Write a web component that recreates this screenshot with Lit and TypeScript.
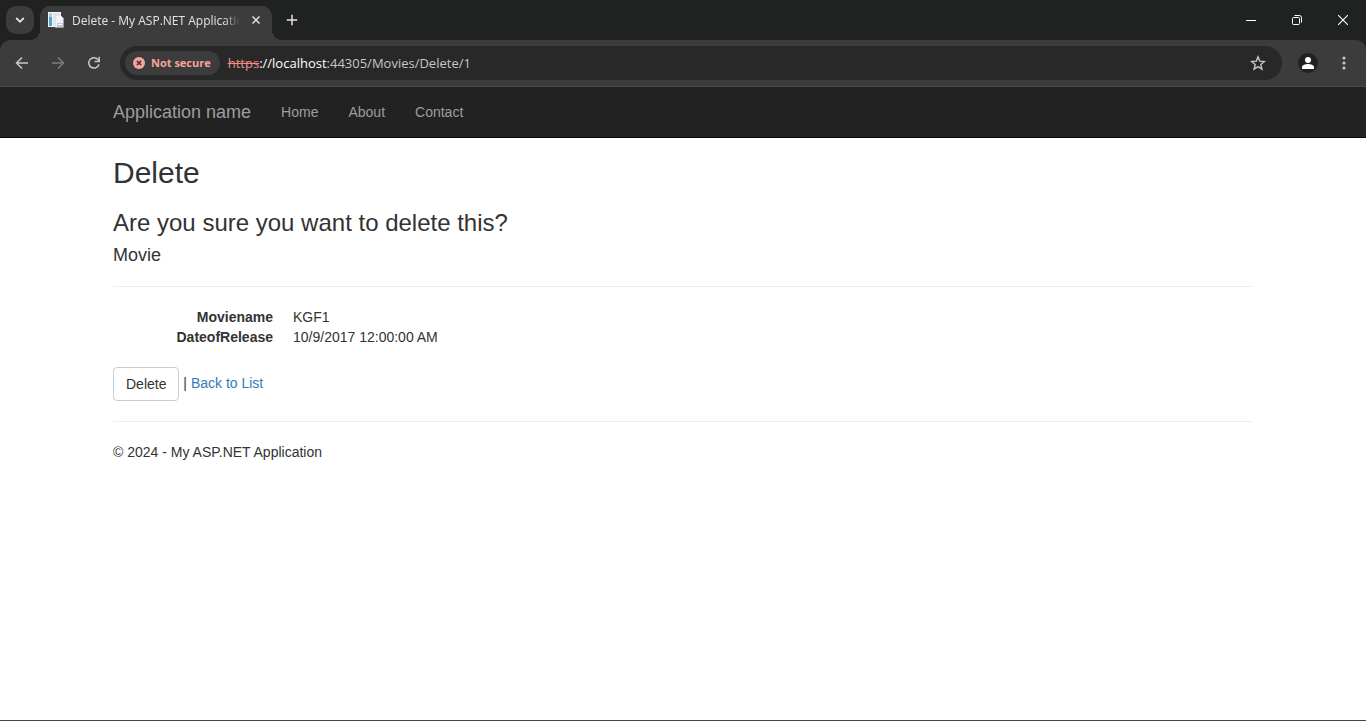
import { LitElement, html, css } from "lit";
import { customElement, property } from "lit/decorators.js";

@customElement("browser-chrome")
class BrowserChrome extends LitElement {
  @property() pageTitle = "";

  static styles = css`
    :host {
      display: block;
      font: 12px/16px "Open Sans", "Noto Sans", sans-serif;
      color: #e3e3e3;
      background: #202222;
    }
    * {
      box-sizing: border-box;
    }
    button {
      display: flex;
      align-items: center;
      justify-content: center;
      flex: none;
      margin: 0;
      padding: 0;
      border: 0;
      background: none;
      color: inherit;
      font: inherit;
    }
    svg {
      display: block;
      flex: none;
      fill: none;
      stroke: currentColor;
    }
    svg.solid {
      stroke: none;
    }
    .strip {
      display: flex;
      height: 40px;
      padding-left: 6px;
    }
    .search {
      width: 28px;
      height: 28px;
      margin: 6px 6px 0 0;
      border-radius: 10px;
      background: #3c3c3c;
    }
    .tab {
      position: relative;
      display: flex;
      align-items: center;
      width: 232px;
      height: 34px;
      margin-top: 6px;
      padding: 0 8px 6px;
      border-radius: 10px 10px 0 0;
      background: #3c3c3c;
    }
    .tab::before,
    .tab::after {
      content: "";
      position: absolute;
      bottom: 0;
      width: 10px;
      height: 10px;
    }
    .tab::before {
      right: 100%;
      background: radial-gradient(circle at 0 0, transparent 10px, #3c3c3c 10px);
    }
    .tab::after {
      left: 100%;
      background: radial-gradient(circle at 100% 0, transparent 10px, #3c3c3c 10px);
    }
    .title {
      flex: 1;
      min-width: 0;
      margin-left: 8px;
      padding-top: 2px;
      overflow: hidden;
      white-space: nowrap;
      -webkit-mask-image: linear-gradient(to left, transparent, #000 16px);
      mask-image: linear-gradient(to left, transparent, #000 16px);
    }
    .close {
      width: 16px;
      height: 16px;
      margin-left: 8px;
    }
    .plus {
      width: 28px;
      height: 28px;
      margin: 6px 0 0 6px;
    }
    .window {
      display: flex;
      margin-left: auto;
      color: #fff;
    }
    .window button {
      width: 46px;
      height: 40px;
    }
    .bar {
      display: flex;
      align-items: center;
      height: 47px;
      padding: 0 8px;
      border-bottom: 1px solid #4a4a4a;
      border-radius: 10px 10px 0 0;
      background: #3c3c3c;
      color: #c7c7c7;
    }
    .tool {
      width: 28px;
      height: 28px;
      margin-right: 8px;
    }
    .tool:last-child {
      margin-right: 0;
    }
    .dim {
      color: #7c7c7c;
    }
    .omnibox {
      display: flex;
      flex: 1;
      align-items: center;
      height: 34px;
      margin: 0 12px 0 4px;
      padding: 0 16px 0 5px;
      border-radius: 17px;
      background: #282828;
    }
    .chip {
      gap: 6px;
      height: 24px;
      margin-right: 8px;
      padding: 0 9px 0 8px;
      border-radius: 12px;
      background: #3c3c3c;
      color: #f6a49b;
      font-size: 11px;
      font-weight: 700;
    }
    .url {
      flex: none;
      color: #fff;
      font-size: 13px;
      line-height: 20px;
    }
    .scheme {
      color: #f28b82;
    }
    input {
      flex: 1;
      min-width: 0;
      height: 20px;
      padding: 0;
      border: 0;
      outline: 0;
      background: none;
      color: #c7c7c7;
      font: 13px/20px "Open Sans", "Noto Sans", sans-serif;
    }
  `;

  render() {
    return html`
      <div class="strip">
        <button class="search" aria-label="Search tabs">
          <svg width="10" height="10" viewBox="0 0 10 10" stroke-width="1.8"><path d="M1.2 3 5 6.8 8.8 3" /></svg>
        </button>
        <div class="tab">
          <svg class="solid" width="16" height="16" viewBox="0 0 16 16">
            <path fill="#f4f4f4" d="M0 0h13v15H0z" />
            <path fill="#5a9fd0" d="M1 1h3v13H1z" />
            <path fill="#a9cfe8" d="M1 1h3v4H1z" />
            <path fill="#dfe4e8" d="M5 1h7v13H5z" />
            <path fill="#f0f2f4" stroke="#d3d8dc" stroke-width=".6" d="M7.3 3.3h5l3 3v9h-8z" />
            <path fill="#fff" d="M12 3.5v3h3z" />
            <path fill="#c2c9cf" d="M9 11h6v4H9z" />
            <path fill="#fff" d="M10 12h4v1h-4z" />
          </svg>
          <span class="title">${this.pageTitle}</span>
          <button class="close" aria-label="Close tab">
            <svg width="8" height="8" viewBox="0 0 8 8" stroke-width="1.5"><path d="m.5.5 7 7m0-7-7 7" /></svg>
          </button>
        </div>
        <button class="plus" aria-label="New tab">
          <svg width="12" height="12" viewBox="0 0 12 12" stroke-width="1.5"><path d="M6 .8v10.4M.8 6h10.4" /></svg>
        </button>
        <div class="window">
          <button aria-label="Minimize">
            <svg width="10" height="10" viewBox="0 0 10 10"><path d="M0 5.5h10" /></svg>
          </button>
          <button aria-label="Restore">
            <svg width="10" height="10" viewBox="0 0 10 10">
              <rect x=".5" y="2.5" width="7" height="7" rx="1" />
              <path d="M2.5.5h5a2 2 0 0 1 2 2v5" />
            </svg>
          </button>
          <button aria-label="Close window">
            <svg width="10" height="10" viewBox="0 0 10 10" stroke-width="1.1"><path d="m0 0 10 10M10 0 0 10" /></svg>
          </button>
        </div>
      </div>
      <div class="bar">
        <button class="tool" aria-label="Back">
          <svg width="14" height="14" viewBox="0 0 14 14" stroke-width="1.5"><path d="M13 7H2M7 1.5 1.5 7 7 12.5" /></svg>
        </button>
        <button class="tool dim" aria-label="Forward">
          <svg width="14" height="14" viewBox="0 0 14 14" stroke-width="1.5"><path d="M1 7h11M7 1.5 12.5 7 7 12.5" /></svg>
        </button>
        <button class="tool" aria-label="Reload">
          <svg width="14" height="14" viewBox="0 0 14 14" stroke-width="1.5">
            <path d="M12 8.2A5.2 5.2 0 1 1 11 3.6L12 5" />
            <path d="M12.2.8v4.6H7.6" />
          </svg>
        </button>
        <div class="omnibox">
          <button class="chip">
            <svg class="solid" width="12" height="12" viewBox="0 0 12 12">
              <circle cx="6" cy="6" r="6" fill="currentColor" />
              <path stroke="#3c3c3c" stroke-width="1.5" d="m3.9 3.9 4.2 4.2m0-4.2L3.9 8.1" />
            </svg>
            Not secure
          </button>
          <label class="url" for="address"><s class="scheme">https</s>://localhost</label>
          <input id="address" type="text" value=":44305/Movies/Delete/1" />
          <button aria-label="Bookmark this tab">
            <svg width="16" height="16" viewBox="0 0 16 16" stroke-width="1.4">
              <path d="m8 1.8 1.7 4.3 4.7.4-3.6 3 1.1 4.6L8 11.6l-3.9 2.5 1.1-4.6-3.6-3 4.7-.4z" />
            </svg>
          </button>
        </div>
        <button class="tool" aria-label="Profile">
          <svg class="solid" width="20" height="20" viewBox="0 0 20 20">
            <circle cx="10" cy="10" r="10" fill="#202222" />
            <circle cx="10" cy="7" r="3" fill="#fff" />
            <path fill="#fff" d="M4 16v-2c0-2 3.5-3 6-3s6 1 6 3v2z" />
          </svg>
        </button>
        <button class="tool" aria-label="Menu">
          <svg class="solid" width="4" height="14" viewBox="0 0 4 14">
            <g fill="currentColor">
              <circle cx="2" cy="2" r="1.6" /><circle cx="2" cy="7" r="1.6" /><circle cx="2" cy="12" r="1.6" />
            </g>
          </svg>
        </button>
      </div>
    `;
  }
}

@customElement("app-root")
class AppRoot extends LitElement {
  private movie = [
    ["Moviename", "KGF1"],
    ["DateofRelease", "10/9/2017 12:00:00 AM"],
  ];

  static styles = css`
    :host {
      display: block;
      box-sizing: border-box;
      min-height: 100vh;
      border-bottom: 1px solid #444;
      background: #fff;
      color: #333;
      font: 14px/20px "Helvetica Neue", "Liberation Sans", Arial, sans-serif;
    }
    * {
      box-sizing: border-box;
    }
    .container {
      max-width: 1170px;
      margin: 0 auto;
      padding: 0 15px;
    }
    nav {
      background: #222;
      border-bottom: 1px solid #080808;
    }
    nav a {
      color: #9d9d9d;
      text-decoration: none;
    }
    .links {
      display: flex;
      gap: 30px;
      padding-top: 15px;
      padding-bottom: 15px;
    }
    .brand {
      font-size: 18px;
    }
    h2,
    h3,
    h4 {
      font-weight: 400;
    }
    h2 {
      margin: 19px 0 20px;
      font-size: 30px;
      line-height: 32px;
    }
    h3 {
      margin: 0 0 8px;
      font-size: 24px;
      line-height: 28px;
    }
    h4 {
      margin: 0;
      font-size: 18px;
      line-height: 20px;
    }
    hr {
      margin: 20px 0;
      border: 0;
      border-top: 1px solid #eee;
    }
    h4 + hr {
      margin-top: 21px;
    }
    dl {
      display: grid;
      grid-template-columns: 160px 1fr;
      column-gap: 20px;
      margin: 0 0 20px;
    }
    dt {
      font-weight: 700;
      text-align: right;
    }
    dd {
      margin: 0;
    }
    .delete {
      margin: 0;
      padding: 6px 12px;
      border: 1px solid #ccc;
      border-radius: 4px;
      background: #fff;
      color: #333;
      font: inherit;
      vertical-align: middle;
    }
    .back {
      color: #337ab7;
      text-decoration: none;
    }
    footer p {
      margin: 0 0 10px;
    }
  `;

  render() {
    return html`
      <browser-chrome pageTitle="Delete - My ASP.NET Application"></browser-chrome>
      <nav>
        <div class="container links">
          <a class="brand" href="#">Application name</a>
          <a href="#">Home</a>
          <a href="#">About</a>
          <a href="#">Contact</a>
        </div>
      </nav>
      <main class="container">
        <h2>Delete</h2>
        <h3>Are you sure you want to delete this?</h3>
        <h4>Movie</h4>
        <hr />
        <dl>
          ${this.movie.map(([name, value]) => html`<dt>${name}</dt><dd>${value}</dd>`)}
        </dl>
        <form @submit=${(e: Event) => e.preventDefault()}>
          <button class="delete" type="submit">Delete</button> | <a class="back" href="#">Back to List</a>
        </form>
        <hr />
        <footer><p>© 2024 - My ASP.NET Application</p></footer>
      </main>
    `;
  }
}
